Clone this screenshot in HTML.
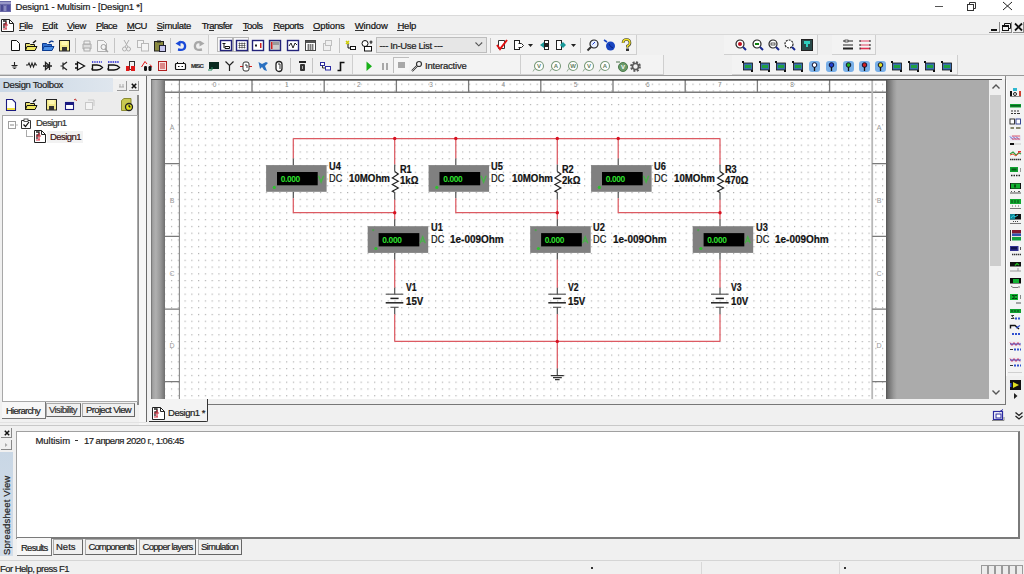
<!DOCTYPE html><html><head><meta charset="utf-8"><style>
html,body{margin:0;padding:0;width:1024px;height:574px;overflow:hidden;background:#f0f0f0;}
body{position:relative;font-family:"Liberation Sans",sans-serif;}
.t{position:absolute;white-space:nowrap;-webkit-text-stroke:0.2px currentColor;}
.b{position:absolute;}
svg.b{overflow:visible;}
</style></head><body>
<div class="b" style="left:0px;top:0px;width:1024px;height:15px;background:#fff;"></div>
<div class="b" style="left:0px;top:15px;width:1024px;height:1px;background:#dadada;"></div>
<svg class="b" style="left:0px;top:1px;" width="12" height="11" viewBox="0 0 12 11"><rect x="0" y="0" width="11" height="11" fill="#6a6aa8"/><rect x="0" y="1" width="11" height="2" fill="#9898c8"/><rect x="1" y="4" width="2" height="6" fill="#4a4a90"/><rect x="4" y="5" width="2" height="5" fill="#8a8ac0"/><rect x="7" y="4" width="3" height="6" fill="#5050a0"/></svg>
<div class="t" style="left:15.60px;top:2.26px;font-size:9.5px;line-height:9.5px;letter-spacing:-0.201px;font-weight:400;color:#1a1a1a;">Design1 - Multisim - [Design1 *]</div>
<div class="b" style="left:935px;top:6px;width:8px;height:1px;background:#555;"></div>
<svg class="b" style="left:967px;top:2px;" width="10" height="9" viewBox="0 0 10 9"><rect x="0.5" y="2.5" width="6" height="6" fill="none" stroke="#333"/><path d="M2.5 2.5V0.5H8.5V6.5H6.5" fill="none" stroke="#333"/></svg>
<svg class="b" style="left:1002px;top:1px;" width="11" height="10" viewBox="0 0 11 10"><path d="M1 1L10 9M10 1L1 9" stroke="#222" stroke-width="1"/></svg>
<div class="b" style="left:0px;top:16px;width:1024px;height:18px;background:#f0f0f0;"></div>
<svg class="b" style="left:1px;top:19px;" width="13" height="13" viewBox="0 0 13 13"><path d="M0.5 0.5H8.5L12.5 4.5V12.5H0.5Z" fill="#fff" stroke="#222"/><path d="M8.5 0.5V4.5H12.5" fill="none" stroke="#222"/><path d="M2 2H5V5H3V9" stroke="#222" stroke-width="1.3" fill="none"/><path d="M2 6H7M5 3V10M2 10H6" stroke="#d03040" stroke-width="1.1" fill="none"/></svg>
<div class="t" style="left:18.90px;top:20.56px;font-size:9.5px;line-height:9.5px;letter-spacing:-0.377px;font-weight:400;color:#111;">File</div>
<div class="b" style="left:18.9px;top:30.2px;width:5.802421875px;height:1px;background:#333;"></div>
<div class="t" style="left:42.30px;top:20.56px;font-size:9.5px;line-height:9.5px;letter-spacing:-0.267px;font-weight:400;color:#111;">Edit</div>
<div class="b" style="left:42.3px;top:30.2px;width:6.336796874999997px;height:1px;background:#333;"></div>
<div class="t" style="left:67.00px;top:20.56px;font-size:9.5px;line-height:9.5px;letter-spacing:-0.355px;font-weight:400;color:#111;">View</div>
<div class="b" style="left:67px;top:30.2px;width:6.3367968750000045px;height:1px;background:#333;"></div>
<div class="t" style="left:96.00px;top:20.56px;font-size:9.5px;line-height:9.5px;letter-spacing:-0.553px;font-weight:400;color:#111;">Place</div>
<div class="b" style="left:96px;top:30.2px;width:6.3367968750000045px;height:1px;background:#333;"></div>
<div class="t" style="left:126.70px;top:20.56px;font-size:9.5px;line-height:9.5px;letter-spacing:-0.445px;font-weight:400;color:#111;">MCU</div>
<div class="b" style="left:126.7px;top:30.2px;width:7.91320312500001px;height:1px;background:#333;"></div>
<div class="t" style="left:156.60px;top:20.56px;font-size:9.5px;line-height:9.5px;letter-spacing:-0.320px;font-weight:400;color:#111;">Simulate</div>
<div class="b" style="left:156.6px;top:30.2px;width:6.3367968750000045px;height:1px;background:#333;"></div>
<div class="t" style="left:201.70px;top:20.56px;font-size:9.5px;line-height:9.5px;letter-spacing:-0.564px;font-weight:400;color:#111;">Transfer</div>
<div class="b" style="left:208.5px;top:30.2px;width:5.0px;height:1px;background:#333;"></div>
<div class="t" style="left:242.70px;top:20.56px;font-size:9.5px;line-height:9.5px;letter-spacing:-0.455px;font-weight:400;color:#111;">Tools</div>
<div class="b" style="left:242.7px;top:30.2px;width:5.802421874999993px;height:1px;background:#333;"></div>
<div class="t" style="left:273.20px;top:20.56px;font-size:9.5px;line-height:9.5px;letter-spacing:-0.466px;font-weight:400;color:#111;">Reports</div>
<div class="b" style="left:273.2px;top:30.2px;width:6.860781250000002px;height:1px;background:#333;"></div>
<div class="t" style="left:313.00px;top:20.56px;font-size:9.5px;line-height:9.5px;letter-spacing:-0.148px;font-weight:400;color:#111;">Options</div>
<div class="b" style="left:313px;top:30.2px;width:7.389218749999998px;height:1px;background:#333;"></div>
<div class="t" style="left:354.80px;top:20.56px;font-size:9.5px;line-height:9.5px;letter-spacing:-0.165px;font-weight:400;color:#111;">Window</div>
<div class="b" style="left:354.8px;top:30.2px;width:8.967109375000007px;height:1px;background:#333;"></div>
<div class="t" style="left:397.40px;top:20.56px;font-size:9.5px;line-height:9.5px;letter-spacing:-0.184px;font-weight:400;color:#111;">Help</div>
<div class="b" style="left:397.4px;top:30.2px;width:6.860781250000002px;height:1px;background:#333;"></div>
<div class="b" style="left:989px;top:22px;width:11px;height:11px;background:#f0f0f0;border-right:1px solid #888;border-bottom:1px solid #888;box-sizing:border-box;"></div>
<div class="b" style="left:1001px;top:22px;width:11px;height:11px;background:#f0f0f0;border-right:1px solid #888;border-bottom:1px solid #888;box-sizing:border-box;"></div>
<div class="b" style="left:1013px;top:22px;width:11px;height:11px;background:#f0f0f0;border-right:1px solid #888;border-bottom:1px solid #888;box-sizing:border-box;"></div>
<svg class="b" style="left:991px;top:28px;" width="6" height="3" viewBox="0 0 6 3"><rect x="0" y="1" width="6" height="2" fill="#111"/></svg>
<svg class="b" style="left:1002px;top:23px;" width="9" height="8" viewBox="0 0 9 8"><rect x="0.5" y="2.5" width="6" height="5" fill="none" stroke="#111"/><rect x="0.5" y="2.5" width="6" height="1.5" fill="#111"/><path d="M2.5 2V0.5H8.5V5.5H7" fill="none" stroke="#111"/></svg>
<svg class="b" style="left:1014px;top:23px;" width="9" height="8" viewBox="0 0 9 8"><path d="M1 0.5L8 7.5M8 0.5L1 7.5" stroke="#111" stroke-width="1.8"/></svg>
<div class="b" style="left:0px;top:34px;width:1024px;height:1px;background:#d8d8d8;"></div>
<div class="b" style="left:0px;top:35px;width:1024px;height:40px;background:#f0f0f0;"></div>
<div class="b" style="left:0px;top:35px;width:209px;height:20px;background:#f0f0f0;border-right:1px solid #cfcfcf;border-bottom:1px solid #cfcfcf;box-sizing:border-box;"></div>
<div class="b" style="left:209px;top:35px;width:428px;height:20px;background:#f3f3f3;border-right:1px solid #cfcfcf;border-bottom:1px solid #cfcfcf;box-sizing:border-box;"></div>
<div class="b" style="left:724px;top:35px;width:94px;height:20px;background:#f3f3f3;border-right:1px solid #cfcfcf;border-bottom:1px solid #cfcfcf;box-sizing:border-box;"></div>
<div class="b" style="left:832px;top:35px;width:44px;height:20px;background:#f3f3f3;border-right:1px solid #cfcfcf;border-bottom:1px solid #cfcfcf;box-sizing:border-box;"></div>
<div class="b" style="left:0px;top:55px;width:353px;height:20px;background:#f0f0f0;border-right:1px solid #cfcfcf;border-bottom:1px solid #cfcfcf;box-sizing:border-box;"></div>
<div class="b" style="left:353px;top:55px;width:168px;height:20px;background:#f3f3f3;border-right:1px solid #cfcfcf;border-bottom:1px solid #cfcfcf;box-sizing:border-box;"></div>
<div class="b" style="left:521px;top:55px;width:143px;height:20px;background:#f3f3f3;border-right:1px solid #cfcfcf;border-bottom:1px solid #cfcfcf;box-sizing:border-box;"></div>
<div class="b" style="left:732px;top:55px;width:226px;height:20px;background:#f3f3f3;border-right:1px solid #cfcfcf;border-bottom:1px solid #cfcfcf;box-sizing:border-box;"></div>
<div class="b" style="left:75px;top:38px;width:1px;height:15px;background:#c4c4c4;"></div>
<div class="b" style="left:114px;top:38px;width:1px;height:15px;background:#c4c4c4;"></div>
<div class="b" style="left:170px;top:38px;width:1px;height:15px;background:#c4c4c4;"></div>
<div class="b" style="left:339px;top:38px;width:1px;height:15px;background:#c4c4c4;"></div>
<div class="b" style="left:490px;top:38px;width:1px;height:15px;background:#c4c4c4;"></div>
<div class="b" style="left:580px;top:38px;width:1px;height:15px;background:#c4c4c4;"></div>
<div class="b" style="left:290px;top:58px;width:1px;height:15px;background:#c4c4c4;"></div>
<div class="b" style="left:312px;top:58px;width:1px;height:15px;background:#c4c4c4;"></div>
<div class="b" style="left:0px;top:75px;width:1024px;height:1px;background:#9a9a9a;"></div>
<div class="b" style="left:0px;top:76px;width:1024px;height:3px;background:#f7f7f7;"></div>
<svg class="b" style="left:10px;top:40px;" width="13" height="13" viewBox="0 0 13 13"><path d="M1.5 0.5H6.5L9.5 3.5V10.5H1.5Z" fill="#fff" stroke="#111"/></svg>
<svg class="b" style="left:25px;top:40px;" width="13" height="13" viewBox="0 0 13 13"><path d="M0.5 3.5H4.5L5.5 4.5H9.5V10.5H0.5Z" fill="#e8e070" stroke="#111"/><path d="M2 6.5H12L10 10.5H0.5Z" fill="#f0e860" stroke="#111"/><path d="M8 3L11 0.5" stroke="#111" stroke-width="1.5"/></svg>
<svg class="b" style="left:42px;top:40px;" width="13" height="13" viewBox="0 0 13 13"><path d="M0.5 3.5H4.5L5.5 4.5H9.5V10.5H0.5Z" fill="#3070d0" stroke="#0a3a90"/><path d="M2 6.5H12L10 10.5H0.5Z" fill="#4a90e8" stroke="#0a3a90"/><path d="M7 3Q9 0 11.5 2" stroke="#0a3a90" fill="none" stroke-width="1.3"/></svg>
<svg class="b" style="left:59px;top:40px;" width="13" height="13" viewBox="0 0 13 13"><rect x="0.5" y="0.5" width="10" height="10.5" fill="#f2e88a" stroke="#222"/><rect x="2.5" y="1" width="6" height="4" fill="#fff8b0"/><rect x="3" y="7" width="5" height="4" fill="#333"/></svg>
<svg class="b" style="left:81px;top:40px;" width="13" height="13" viewBox="0 0 13 13"><path d="M2 4H10V9H2Z" fill="#ddd" stroke="#aaa"/><path d="M3 1H9V4H3Z" fill="#eee" stroke="#aaa"/><rect x="3" y="8" width="6" height="3" fill="#eee" stroke="#aaa"/></svg>
<svg class="b" style="left:97px;top:40px;" width="13" height="13" viewBox="0 0 13 13"><path d="M0.5 0.5H6.5L9.5 3.5V11.5H0.5Z" fill="#f4f4f4" stroke="#b0b0b0"/><circle cx="6.5" cy="7" r="2.5" fill="none" stroke="#a0a0a0"/><path d="M8 9L11 12" stroke="#a0a0a0" stroke-width="1.5"/></svg>
<svg class="b" style="left:122px;top:40px;" width="13" height="13" viewBox="0 0 13 13"><path d="M2 0L6 7M7 0L3 7" stroke="#b0b0b0"/><circle cx="2.5" cy="9" r="2" fill="none" stroke="#b0b0b0"/><circle cx="6.5" cy="9" r="2" fill="none" stroke="#b0b0b0"/></svg>
<svg class="b" style="left:137px;top:40px;" width="13" height="13" viewBox="0 0 13 13"><rect x="0.5" y="0.5" width="6" height="7" fill="#f4f4f4" stroke="#b8b8b8"/><rect x="4.5" y="3.5" width="7" height="7.5" fill="#f4f4f4" stroke="#b8b8b8"/></svg>
<svg class="b" style="left:154px;top:40px;" width="13" height="13" viewBox="0 0 13 13"><rect x="0.5" y="1.5" width="9" height="9.5" fill="#8a8a40" stroke="#222"/><rect x="3" y="0.5" width="4" height="2" fill="#222"/><rect x="5.5" y="5.5" width="6" height="6" fill="#c8c8f0" stroke="#223"/></svg>
<svg class="b" style="left:175px;top:40px;" width="13" height="13" viewBox="0 0 13 13"><path d="M3 9.5Q11 11 10 5Q9 1 4 2.5" fill="none" stroke="#1a4ad8" stroke-width="2.3"/><path d="M0.5 3.5L5.5 0.5V6.5Z" fill="#1a4ad8"/></svg>
<svg class="b" style="left:193px;top:40px;" width="13" height="13" viewBox="0 0 13 13"><path d="M9 9.5Q1 11 2 5Q3 1 8 2.5" fill="none" stroke="#a8a8a8" stroke-width="2.3"/><path d="M11.5 3.5L6.5 0.5V6.5Z" fill="#a8a8a8"/></svg>
<div class="b" style="left:217px;top:37px;width:16px;height:15px;border:1px solid #b8b8b8;background:#f8f8f8;box-sizing:border-box;"></div>
<div class="b" style="left:233px;top:37px;width:16px;height:15px;border:1px solid #b8b8b8;background:#f8f8f8;box-sizing:border-box;"></div>
<svg class="b" style="left:220px;top:40px;" width="13" height="13" viewBox="0 0 13 13"><rect x="0.5" y="0.5" width="11" height="10" fill="#fff" stroke="#23237a" stroke-width="1.4"/><path d="M2.5 3.5H5.5M4 3.5V8M5 6.5H9.5V8.5H5Z" stroke="#111" fill="none"/></svg>
<svg class="b" style="left:236px;top:40px;" width="13" height="13" viewBox="0 0 13 13"><rect x="0.5" y="0.5" width="11" height="10" fill="#fff" stroke="#23237a" stroke-width="1.4"/><path d="M2.5 3.5H9.5M2.5 5.5H9.5M2.5 7.5H9.5M3.5 2.5V8.5M6 2.5V8.5M8.5 2.5V8.5" stroke="#333" stroke-width="0.6"/></svg>
<svg class="b" style="left:252px;top:40px;" width="13" height="13" viewBox="0 0 13 13"><rect x="0.5" y="0.5" width="11" height="10" fill="#fff" stroke="#23237a" stroke-width="1.4"/><path d="M3 5.5H5M4 4V7" stroke="#222"/><rect x="8" y="3" width="1.5" height="5" fill="#d02020"/></svg>
<svg class="b" style="left:269px;top:40px;" width="13" height="13" viewBox="0 0 13 13"><rect x="0.5" y="0.5" width="11" height="10" fill="#ccc" stroke="#23237a" stroke-width="1.4"/><rect x="2" y="2" width="1.5" height="7" fill="#d02020"/><rect x="4" y="2" width="6" height="3" fill="#999"/></svg>
<svg class="b" style="left:287px;top:40px;" width="13" height="13" viewBox="0 0 13 13"><rect x="0.5" y="0.5" width="11" height="10" fill="#fff" stroke="#23237a" stroke-width="1.4"/><path d="M2 6L4 3L6 8L8 3L10 5" stroke="#222" fill="none"/></svg>
<svg class="b" style="left:305px;top:40px;" width="13" height="13" viewBox="0 0 13 13"><rect x="0.5" y="0.5" width="10" height="10" fill="#fff" stroke="#444"/><rect x="1" y="1" width="9" height="2" fill="#555"/><path d="M2 5H9M2 7H9M2 9H9M3.5 4V10M5.5 4V10M7.5 4V10" stroke="#666" stroke-width="0.8"/></svg>
<svg class="b" style="left:322px;top:40px;" width="13" height="13" viewBox="0 0 13 13"><rect x="1.5" y="3.5" width="7" height="7" fill="#f0f0f0" stroke="#c0c0c0"/><rect x="3.5" y="0.5" width="6" height="5" fill="#f0f0f0" stroke="#c0c0c0"/></svg>
<svg class="b" style="left:345px;top:40px;" width="13" height="13" viewBox="0 0 13 13"><path d="M1 1L4 4M4 1L1 4" stroke="#cc0" stroke-width="1.5"/><path d="M3 4V8H6" stroke="#111" fill="none"/><rect x="5.5" y="6.5" width="5" height="3" fill="#fff" stroke="#111"/></svg>
<svg class="b" style="left:361px;top:40px;" width="13" height="13" viewBox="0 0 13 13"><circle cx="4" cy="3.5" r="3" fill="#fff" stroke="#111"/><rect x="3.5" y="6.5" width="7" height="4.5" fill="#fff" stroke="#111"/><path d="M10 0.5V4M8.5 2H11.5" stroke="#111"/></svg>
<div class="b" style="left:376px;top:37px;width:111px;height:16px;background:#e6e6e6;border:1px solid #bdbdbd;box-sizing:border-box;"></div>
<div class="t" style="left:379.50px;top:40.76px;font-size:9.5px;line-height:9.5px;letter-spacing:-0.350px;font-weight:400;color:#222;">--- In-Use List ---</div>
<svg class="b" style="left:475px;top:42px;" width="8" height="5" viewBox="0 0 8 5"><path d="M0.5 0.5L3.8 3.8L7.2 0.5" fill="none" stroke="#555" stroke-width="1.1"/></svg>
<svg class="b" style="left:497px;top:39px;" width="13" height="13" viewBox="0 0 13 13"><path d="M1.5 1.5H7.5V9.5H1.5Z" fill="#fff" stroke="#333"/><path d="M0 6L3 10L10 1" stroke="#e01010" stroke-width="2" fill="none"/></svg>
<svg class="b" style="left:514px;top:40px;" width="13" height="13" viewBox="0 0 13 13"><rect x="0.5" y="0.5" width="5" height="9" fill="#fff" stroke="#222"/><path d="M4.5 3.5H7.5L9.5 5.5L7.5 7.5H4.5" fill="#fff" stroke="#222"/></svg>
<svg class="b" style="left:528px;top:44px;" width="5" height="3" viewBox="0 0 5 3"><path d="M0 0H5L2.5 3Z" fill="#222"/></svg>
<svg class="b" style="left:540px;top:40px;" width="13" height="13" viewBox="0 0 13 13"><rect x="4.5" y="0.5" width="4" height="9" fill="#fff" stroke="#222"/><path d="M0 5L4 2V8Z" fill="#1a9a9a"/><rect x="5" y="3" width="3" height="4" fill="#222"/></svg>
<svg class="b" style="left:556px;top:40px;" width="13" height="13" viewBox="0 0 13 13"><rect x="0.5" y="0.5" width="5" height="9" fill="#fff" stroke="#222"/><path d="M4 5L7 2L10 5L7 8Z" fill="#1a9a9a"/></svg>
<svg class="b" style="left:571px;top:44px;" width="5" height="3" viewBox="0 0 5 3"><path d="M0 0H5L2.5 3Z" fill="#222"/></svg>
<svg class="b" style="left:587px;top:39px;" width="13" height="13" viewBox="0 0 13 13"><circle cx="7" cy="5" r="4" fill="#e8f0ff" stroke="#222" stroke-width="1.2"/><path d="M4 8L0.5 11.5" stroke="#333" stroke-width="2"/><path d="M5.5 5.5L8 3" stroke="#1a3acc"/></svg>
<svg class="b" style="left:603px;top:39px;" width="13" height="13" viewBox="0 0 13 13"><circle cx="7.5" cy="7" r="4.5" fill="#1844c0"/><path d="M6 5Q7 8 10 9" stroke="#082080" fill="none"/><path d="M1 1L4 3" stroke="#1844c0" stroke-width="1.6"/></svg>
<svg class="b" style="left:621px;top:39px;" width="13" height="13" viewBox="0 0 13 13"><path d="M2 4Q2 0.5 5.5 0.5Q9 0.5 9 4Q9 6 6.5 7V8.5" fill="none" stroke="#333" stroke-width="2.6"/><path d="M2 4Q2 0.5 5.5 0.5Q9 0.5 9 4Q9 6 6.5 7V8.5" fill="none" stroke="#f0e020" stroke-width="1.4"/><rect x="5" y="9.5" width="3" height="2.5" fill="#333"/></svg>
<svg class="b" style="left:735px;top:39px;" width="13" height="13" viewBox="0 0 13 13"><circle cx="5" cy="5" r="4" fill="#fff" stroke="#222" stroke-width="1.2"/><circle cx="5" cy="5" r="2" fill="#c01020"/><path d="M8 8L11 11" stroke="#1a2a90" stroke-width="2"/></svg>
<svg class="b" style="left:752px;top:39px;" width="13" height="13" viewBox="0 0 13 13"><circle cx="5" cy="5" r="4" fill="#fff" stroke="#222" stroke-width="1.2"/><rect x="3" y="4" width="4" height="2" fill="#108010"/><path d="M8 8L11 11" stroke="#1a2a90" stroke-width="2"/></svg>
<svg class="b" style="left:768px;top:39px;" width="13" height="13" viewBox="0 0 13 13"><circle cx="5" cy="5" r="4" fill="#fff" stroke="#222" stroke-width="1.2"/><rect x="3" y="4" width="4" height="2" fill="none" stroke="#333" stroke-width="0.8"/><path d="M8 8L11 11" stroke="#1a2a90" stroke-width="2"/></svg>
<svg class="b" style="left:784px;top:39px;" width="13" height="13" viewBox="0 0 13 13"><circle cx="5" cy="5" r="4" fill="#fff" stroke="#222" stroke-width="1.2" stroke-dasharray="2 1"/><path d="M8 8L11 11" stroke="#1a2a90" stroke-width="2"/></svg>
<svg class="b" style="left:801px;top:39px;" width="13" height="13" viewBox="0 0 13 13"><rect x="0.5" y="0.5" width="11" height="11" fill="#2a4a4a" stroke="#222"/><rect x="3" y="2" width="6" height="3" fill="#30d0c0"/><rect x="5" y="5" width="2" height="3" fill="#30d0c0"/></svg>
<svg class="b" style="left:842px;top:39px;" width="13" height="13" viewBox="0 0 13 13"><path d="M1 2H11M1 6H11M1 9.5H11" stroke="#222" stroke-width="1"/><rect x="3" y="1" width="3" height="2" fill="#fff" stroke="#222" stroke-width="0.7"/><rect x="1" y="8.5" width="10" height="2" fill="#222"/></svg>
<svg class="b" style="left:859px;top:39px;" width="13" height="13" viewBox="0 0 13 13"><path d="M1 2H11M1 6H11" stroke="#e04060" stroke-width="1"/><path d="M1 9.5H11" stroke="#e03050" stroke-width="1.6"/><path d="M1 1V3M11 1V3M1 5V7M11 5V7M1 8.5V10.5M11 8.5V10.5" stroke="#222"/></svg>
<svg class="b" style="left:11px;top:61px;" width="8" height="10" viewBox="0 0 8 10"><path d="M3.5 1V4M0.5 4.5H6.5M1.5 6H5.5M2.5 7.5H4.5" stroke="#222" stroke-width="1.1"/></svg>
<svg class="b" style="left:26px;top:61px;" width="12" height="10" viewBox="0 0 12 10"><path d="M0 4H2L3 2L4.5 6L6 2L7.5 6L9 2L10 4H11" stroke="#222" fill="none" stroke-width="1.1"/></svg>
<svg class="b" style="left:43px;top:61px;" width="10" height="11" viewBox="0 0 10 11"><path d="M0 5H9M2.5 1.5V8.5L6.5 5ZM6.5 1V9" stroke="#222" fill="none" stroke-width="1.3"/></svg>
<svg class="b" style="left:60px;top:61px;" width="9" height="11" viewBox="0 0 9 11"><path d="M0.5 5H3M3 1.5V8.5M3 4L7 1M3 6L7 9" stroke="#222" fill="none" stroke-width="1.2"/></svg>
<svg class="b" style="left:75px;top:61px;" width="11" height="11" viewBox="0 0 11 11"><path d="M2.5 1V9L9.5 5Z" fill="#fff" stroke="#111" stroke-width="1.3"/><path d="M0 3H2.5M0 7H2.5" stroke="#111" stroke-width="1.3"/></svg>
<svg class="b" style="left:91px;top:61px;" width="13" height="11" viewBox="0 0 13 11"><path d="M1 1H11" stroke="#2020d0" stroke-width="1.6" stroke-dasharray="1.3 1"/><path d="M1.5 4H6Q9.5 4 11.5 6.5Q9.5 9 6 9H1.5Z" fill="none" stroke="#111" stroke-width="1.3"/><path d="M0 8H2" stroke="#111"/></svg>
<svg class="b" style="left:107px;top:61px;" width="14" height="11" viewBox="0 0 14 11"><path d="M1 1H12" stroke="#2020d0" stroke-width="1.6" stroke-dasharray="1.5 0.8"/><path d="M1.5 4H7Q10.5 4 12.5 6.5Q10.5 9 7 9H1.5Z" fill="none" stroke="#111" stroke-width="1.3"/><path d="M0 8H2" stroke="#111"/></svg>
<svg class="b" style="left:125px;top:61px;" width="11" height="11" viewBox="0 0 11 11"><rect x="4.5" y="0.5" width="5" height="8" fill="none" stroke="#333"/><rect x="1" y="5" width="3.5" height="5" fill="#e01818"/><rect x="6" y="5" width="4" height="5" fill="#e01818"/></svg>
<svg class="b" style="left:141px;top:61px;" width="12" height="11" viewBox="0 0 12 11"><path d="M0.5 6L4 0.5L6 3" stroke="#e01818" fill="none"/><rect x="3" y="5" width="3" height="5" rx="1.2" fill="#111"/><rect x="7.5" y="5" width="3" height="5" rx="1.2" fill="#111"/><path d="M9 3.5L11 6" stroke="#e01818"/></svg>
<svg class="b" style="left:158px;top:61px;" width="10" height="11" viewBox="0 0 10 11"><rect x="0.5" y="0.5" width="8" height="9" fill="#f8e0e0" stroke="#b02020"/><path d="M2 3H7M2 5H7M2 7H7" stroke="#c03030"/></svg>
<svg class="b" style="left:175px;top:61px;" width="12" height="11" viewBox="0 0 12 11"><rect x="0.5" y="2.5" width="10" height="6" rx="1" fill="#fff" stroke="#111" stroke-width="1.2"/><path d="M3 5.5H4.5M6.5 5.5H8M2.5 1V2.5M8.5 1V2.5" stroke="#111"/></svg>
<div class="t" style="left:191.00px;top:63.42px;font-size:6px;line-height:6px;letter-spacing:-0.750px;font-weight:700;color:#333;">MISC</div>
<svg class="b" style="left:208px;top:61px;" width="12" height="11" viewBox="0 0 12 11"><rect x="1" y="1" width="10" height="7" fill="#0a2a20"/><path d="M0 9H4V6" stroke="#2a8a60" fill="none"/></svg>
<svg class="b" style="left:225px;top:61px;" width="9" height="11" viewBox="0 0 9 11"><path d="M4.5 4V10M0.5 0.5L4.5 4.5L8.5 0.5" stroke="#222" fill="none" stroke-width="1.2"/></svg>
<svg class="b" style="left:240px;top:61px;" width="12" height="11" viewBox="0 0 12 11"><path d="M0 5.5H3M9 5.5H12" stroke="#d02020" stroke-width="1.2"/><rect x="3" y="1" width="6" height="9" rx="2" fill="#fff" stroke="#333"/><path d="M5 4H7V7" stroke="#333" fill="none"/></svg>
<svg class="b" style="left:258px;top:61px;" width="11" height="11" viewBox="0 0 11 11"><path d="M0.5 1L4 3L8 1L10 2L7 5L9 10L6 9L4 6L2 8Z" fill="#2a70c0"/></svg>
<svg class="b" style="left:275px;top:61px;" width="9" height="11" viewBox="0 0 9 11"><rect x="1" y="0.5" width="6" height="10" rx="3" fill="#fff" stroke="#222" stroke-width="1.3"/><path d="M3 3H5V8" stroke="#333" fill="none"/></svg>
<svg class="b" style="left:298px;top:61px;" width="9" height="11" viewBox="0 0 9 11"><rect x="1" y="0" width="7" height="2" fill="#222"/><rect x="2" y="3" width="5" height="7" rx="1" fill="#333"/><rect x="4" y="5" width="1" height="3" fill="#aaa"/></svg>
<svg class="b" style="left:320px;top:61px;" width="11" height="11" viewBox="0 0 11 11"><rect x="0.5" y="1.5" width="4" height="3" fill="#fff" stroke="#2a2aa0"/><path d="M2.5 4.5V7H6" stroke="#333" fill="none"/><rect x="5.5" y="5.5" width="5" height="3.5" fill="#fff" stroke="#2a2aa0"/></svg>
<svg class="b" style="left:337px;top:61px;" width="9" height="11" viewBox="0 0 9 11"><path d="M0.5 9.5H3.5V1.5H7.5" stroke="#111" stroke-width="1.6" fill="none"/></svg>
<svg class="b" style="left:366px;top:61px;" width="7" height="11" viewBox="0 0 7 11"><path d="M0.5 0.5V10L6 5.2Z" fill="#18b018"/></svg>
<svg class="b" style="left:382px;top:62px;" width="7" height="10" viewBox="0 0 7 10"><rect x="0" y="1" width="2" height="7" fill="#a8a8a8"/><rect x="4" y="1" width="2" height="7" fill="#a8a8a8"/></svg>
<div class="b" style="left:393px;top:57px;width:16px;height:16px;border-left:1px solid #bdbdbd;border-top:1px solid #bdbdbd;background:#f6f6f6;box-sizing:border-box;"></div>
<div class="b" style="left:398px;top:62px;width:7px;height:6px;background:#a8a8a8;"></div>
<svg class="b" style="left:411px;top:61px;" width="11" height="11" viewBox="0 0 11 11"><circle cx="8" cy="3" r="2.5" fill="none" stroke="#333" stroke-width="1.2"/><path d="M6.5 4.5L1 10" stroke="#333" stroke-width="2"/><path d="M6.5 4.5L1 10" stroke="#fff" stroke-width="0.6"/></svg>
<div class="t" style="left:425.00px;top:60.96px;font-size:9.5px;line-height:9.5px;letter-spacing:-0.211px;font-weight:400;color:#222;">Interactive</div>
<svg class="b" style="left:533px;top:61px;" width="12" height="11" viewBox="0 0 12 11"><circle cx="6" cy="5" r="4.5" fill="#fff" stroke="#7a9a7a" stroke-width="1.1"/><path d="M1.5 8L0 10.5" stroke="#9ab09a"/><text x="6" y="7.3" font-size="6" text-anchor="middle" fill="#608060" font-family="Liberation Sans" font-weight="bold">V</text></svg>
<svg class="b" style="left:550px;top:61px;" width="12" height="11" viewBox="0 0 12 11"><circle cx="6" cy="5" r="4.5" fill="#fff" stroke="#7a9a7a" stroke-width="1.1"/><path d="M1.5 8L0 10.5" stroke="#9ab09a"/><text x="6" y="7.3" font-size="6" text-anchor="middle" fill="#608060" font-family="Liberation Sans" font-weight="bold">A</text></svg>
<svg class="b" style="left:567px;top:61px;" width="12" height="11" viewBox="0 0 12 11"><circle cx="6" cy="5" r="4.5" fill="#fff" stroke="#7a9a7a" stroke-width="1.1"/><path d="M1.5 8L0 10.5" stroke="#9ab09a"/><text x="6" y="7.3" font-size="6" text-anchor="middle" fill="#608060" font-family="Liberation Sans" font-weight="bold">W</text></svg>
<svg class="b" style="left:583px;top:61px;" width="12" height="11" viewBox="0 0 12 11"><circle cx="6" cy="5" r="4.5" fill="#fff" stroke="#7a9a7a" stroke-width="1.1"/><path d="M1.5 8L0 10.5" stroke="#9ab09a"/><text x="6" y="7.3" font-size="6" text-anchor="middle" fill="#608060" font-family="Liberation Sans" font-weight="bold">V</text></svg>
<svg class="b" style="left:599px;top:61px;" width="12" height="11" viewBox="0 0 12 11"><circle cx="6" cy="5" r="4.5" fill="#fff" stroke="#7a9a7a" stroke-width="1.1"/><path d="M1.5 8L0 10.5" stroke="#9ab09a"/><text x="6" y="7.3" font-size="6" text-anchor="middle" fill="#608060" font-family="Liberation Sans" font-weight="bold">A</text></svg>
<svg class="b" style="left:616px;top:61px;" width="12" height="11" viewBox="0 0 12 11"><path d="M0 1H4" stroke="#6a8a6a" stroke-width="1.2"/><circle cx="7" cy="6" r="4.5" fill="#6a9a6a" stroke="#4a7a4a"/><text x="7" y="8.3" font-size="6" text-anchor="middle" fill="#fff" font-family="Liberation Sans" font-weight="bold">V</text></svg>
<svg class="b" style="left:630px;top:61px;" width="11" height="11" viewBox="0 0 11 11"><circle cx="5.5" cy="5.5" r="4.2" fill="none" stroke="#5a5a5a" stroke-width="2.4" stroke-dasharray="1.9 1.4"/><circle cx="5.5" cy="5.5" r="3" fill="none" stroke="#5a5a5a" stroke-width="1.6"/></svg>
<svg class="b" style="left:742px;top:61px;" width="12" height="12" viewBox="0 0 12 12"><rect x="1.5" y="2" width="9" height="7" fill="#3a70b0" stroke="#111" stroke-width="0.8"/><rect x="3" y="4" width="6" height="3" fill="#20a040"/><rect x="0" y="0" width="2" height="2" fill="#111"/><rect x="9" y="9" width="2" height="2" fill="#111"/></svg>
<svg class="b" style="left:759px;top:61px;" width="12" height="12" viewBox="0 0 12 12"><rect x="1.5" y="2" width="9" height="7" fill="#3a70b0" stroke="#111" stroke-width="0.8"/><rect x="3" y="4" width="6" height="3" fill="#20a040"/><rect x="0" y="0" width="2" height="2" fill="#111"/><rect x="9" y="9" width="2" height="2" fill="#111"/></svg>
<svg class="b" style="left:775px;top:61px;" width="12" height="12" viewBox="0 0 12 12"><rect x="1.5" y="2" width="9" height="7" fill="#3a70b0" stroke="#111" stroke-width="0.8"/><rect x="3" y="4" width="6" height="3" fill="#20a040"/><rect x="0" y="0" width="2" height="2" fill="#111"/><rect x="9" y="9" width="2" height="2" fill="#111"/></svg>
<svg class="b" style="left:792px;top:61px;" width="12" height="12" viewBox="0 0 12 12"><rect x="1.5" y="2" width="9" height="7" fill="#3a70b0" stroke="#111" stroke-width="0.8"/><rect x="3" y="4" width="6" height="3" fill="#20a040"/><rect x="0" y="0" width="2" height="2" fill="#111"/><rect x="9" y="9" width="2" height="2" fill="#111"/></svg>
<svg class="b" style="left:809px;top:61px;" width="12" height="12" viewBox="0 0 12 12"><rect x="0" y="0" width="11" height="11" rx="3" fill="#7ab0e8"/><circle cx="5.5" cy="4" r="2.3" fill="#fff" stroke="#113"/><path d="M5.5 6V10" stroke="#111" stroke-width="1.3"/></svg>
<svg class="b" style="left:826px;top:61px;" width="12" height="12" viewBox="0 0 12 12"><rect x="0" y="0" width="11" height="11" rx="3" fill="#7ab0e8"/><circle cx="5.5" cy="4" r="2.3" fill="#2040d0" stroke="#113"/><path d="M5.5 6V10" stroke="#111" stroke-width="1.3"/></svg>
<svg class="b" style="left:843px;top:61px;" width="12" height="12" viewBox="0 0 12 12"><rect x="0" y="0" width="11" height="11" rx="3" fill="#7ab0e8"/><circle cx="5.5" cy="4" r="2.3" fill="#20b020" stroke="#113"/><path d="M5.5 6V10" stroke="#111" stroke-width="1.3"/></svg>
<svg class="b" style="left:859px;top:61px;" width="12" height="12" viewBox="0 0 12 12"><rect x="0" y="0" width="11" height="11" rx="3" fill="#7ab0e8"/><circle cx="5.5" cy="4" r="2.3" fill="#d02020" stroke="#113"/><path d="M5.5 6V10" stroke="#111" stroke-width="1.3"/></svg>
<svg class="b" style="left:875px;top:61px;" width="12" height="12" viewBox="0 0 12 12"><rect x="0" y="0" width="11" height="11" rx="3" fill="#7ab0e8"/><circle cx="5.5" cy="4" r="2.3" fill="#e0e020" stroke="#113"/><path d="M5.5 6V10" stroke="#111" stroke-width="1.3"/></svg>
<svg class="b" style="left:891px;top:61px;" width="12" height="12" viewBox="0 0 12 12"><rect x="1.5" y="2" width="9" height="7" fill="#3a70b0" stroke="#111" stroke-width="0.8"/><rect x="3" y="4" width="6" height="3" fill="#20a040"/><rect x="0" y="0" width="2" height="2" fill="#111"/><rect x="9" y="9" width="2" height="2" fill="#111"/></svg>
<svg class="b" style="left:908px;top:61px;" width="12" height="12" viewBox="0 0 12 12"><rect x="1.5" y="2" width="9" height="7" fill="#3a70b0" stroke="#111" stroke-width="0.8"/><rect x="3" y="4" width="6" height="3" fill="#20a040"/><rect x="0" y="0" width="2" height="2" fill="#111"/><rect x="9" y="9" width="2" height="2" fill="#111"/></svg>
<svg class="b" style="left:924px;top:61px;" width="12" height="12" viewBox="0 0 12 12"><rect x="1.5" y="2" width="9" height="7" fill="#3a70b0" stroke="#111" stroke-width="0.8"/><rect x="3" y="4" width="6" height="3" fill="#20a040"/><rect x="0" y="0" width="2" height="2" fill="#111"/><rect x="9" y="9" width="2" height="2" fill="#111"/></svg>
<svg class="b" style="left:941px;top:61px;" width="12" height="12" viewBox="0 0 12 12"><rect x="1.5" y="2" width="9" height="7" fill="#3a70b0" stroke="#111" stroke-width="0.8"/><rect x="3" y="4" width="6" height="3" fill="#20a040"/><rect x="0" y="0" width="2" height="2" fill="#111"/><rect x="9" y="9" width="2" height="2" fill="#111"/></svg>
<div class="b" style="left:0px;top:78px;width:113px;height:14px;background:linear-gradient(to right,#cbd8e6,#d6e0ea 60%,#dfe6ee);"></div>
<div class="t" style="left:3.00px;top:80.16px;font-size:9.5px;line-height:9.5px;letter-spacing:-0.341px;font-weight:400;color:#222;">Design Toolbox</div>
<div class="b" style="left:116.5px;top:80.5px;width:10px;height:10px;background:#f0f0f0;border-right:1px solid #999;border-bottom:1px solid #999;box-sizing:border-box;"></div>
<div class="b" style="left:128.5px;top:80.5px;width:10px;height:10px;background:#f0f0f0;border-right:1px solid #999;border-bottom:1px solid #999;box-sizing:border-box;"></div>
<svg class="b" style="left:119px;top:84px;" width="5" height="4" viewBox="0 0 5 4"><path d="M0 3H5M1 0V3M4 0V3" stroke="#aaa"/></svg>
<svg class="b" style="left:131px;top:82.5px;" width="6" height="6" viewBox="0 0 6 6"><path d="M0.8 0.8L5.2 5.2M5.2 0.8L0.8 5.2" stroke="#111" stroke-width="1.6"/></svg>
<div class="b" style="left:0px;top:92px;width:139px;height:23px;background:#ececec;"></div>
<div class="b" style="left:137px;top:95px;width:2px;height:310px;background:#8a8a8a;"></div>
<svg class="b" style="left:6px;top:99px;" width="11" height="13" viewBox="0 0 11 13"><path d="M0.5 0.5H6.5L9.5 3.5V11.5H0.5Z" fill="#fff" stroke="#1a1a80" stroke-width="1.1"/><path d="M1 9H9V11H1Z" fill="#f0e040"/></svg>
<svg class="b" style="left:25px;top:99px;" width="13" height="13" viewBox="0 0 13 13"><path d="M0.5 3.5H4.5L5.5 4.5H9.5V10.5H0.5Z" fill="#e8e070" stroke="#111"/><path d="M2 6.5H12L10 10.5H0.5Z" fill="#f0e860" stroke="#111"/><path d="M8 3L11 0.5" stroke="#111" stroke-width="1.5"/></svg>
<svg class="b" style="left:46px;top:99px;" width="12" height="12" viewBox="0 0 12 12"><rect x="0.5" y="0.5" width="10" height="10.5" fill="#f2e88a" stroke="#222"/><rect x="2.5" y="1" width="6" height="4" fill="#fff8b0"/><rect x="3" y="7" width="5" height="4" fill="#333"/></svg>
<svg class="b" style="left:65px;top:99px;" width="12" height="12" viewBox="0 0 12 12"><rect x="0.5" y="3.5" width="8" height="7" fill="#fff" stroke="#1a1a80" stroke-width="1.1"/><rect x="1" y="4" width="7" height="2" fill="#1a1a80"/><path d="M9 1L10.5 0L11.5 2" stroke="#c03030" fill="none"/></svg>
<svg class="b" style="left:84px;top:99px;" width="12" height="12" viewBox="0 0 12 12"><rect x="1.5" y="3.5" width="7" height="7" fill="#f4f4f4" stroke="#c8c8c8"/><path d="M4 1H10V7" stroke="#c8c8c8" fill="none"/></svg>
<svg class="b" style="left:121px;top:98px;" width="13" height="13" viewBox="0 0 13 13"><path d="M0.5 2.5L3 0.5H10V10L7.5 12.5H0.5Z" fill="#c8c850" stroke="#8a8a30"/><circle cx="8" cy="9" r="3.5" fill="#e0e020" stroke="#222" stroke-width="1.3"/><path d="M8 7V9H9.5" stroke="#222"/></svg>
<div class="b" style="left:2px;top:115px;width:136px;height:287px;background:#fff;border:1px solid #a8a8a8;box-sizing:border-box;"></div>
<svg class="b" style="left:8px;top:121px;" width="9" height="9" viewBox="0 0 9 9"><rect x="0.5" y="0.5" width="7" height="7" fill="#fff" stroke="#a0a0a0"/><path d="M2 4H6" stroke="#888"/><path d="M8 4H10" stroke="#bbb"/></svg>
<svg class="b" style="left:21px;top:118px;" width="11" height="12" viewBox="0 0 11 12"><path d="M0.5 2.5H9.5V10.5H0.5Z" fill="#fff" stroke="#333"/><rect x="3" y="1" width="4" height="2.5" fill="#fff" stroke="#333" stroke-width="0.8"/><path d="M2.5 6.5L4.5 8.5L8 4" stroke="#111" stroke-width="1.2" fill="none"/></svg>
<div class="t" style="left:36.00px;top:118.36px;font-size:9.5px;line-height:9.5px;letter-spacing:-0.622px;font-weight:400;color:#333;">Design1</div>
<div class="b" style="left:47px;top:130.5px;width:36px;height:12.5px;background:#f2f2f2;"></div>
<div class="b" style="left:26px;top:130px;width:1px;height:7px;background:#aaa;"></div>
<div class="b" style="left:26px;top:136px;width:7px;height:1px;background:#aaa;"></div>
<svg class="b" style="left:34px;top:130px;" width="13" height="14" viewBox="0 0 13 14"><path d="M0.5 0.5H7.5L11.5 4.5V12.5H0.5Z" fill="#fff" stroke="#222"/><path d="M7.5 0.5V4.5H11.5" fill="none" stroke="#222"/><path d="M2 2H5V5H3V9" stroke="#222" stroke-width="1.3" fill="none"/><path d="M2 6H7M5 3V10M2 10H6" stroke="#d03040" stroke-width="1.1" fill="none"/></svg>
<div class="t" style="left:50.00px;top:132.26px;font-size:9.5px;line-height:9.5px;letter-spacing:-0.550px;font-weight:400;color:#3a1010;">Design1</div>
<div class="b" style="left:2px;top:402px;width:44px;height:17px;background:#f7f7f7;border-right:1px solid #777;border-bottom:1px solid #777;box-sizing:border-box;"></div>
<div class="t" style="left:6.00px;top:406.46px;font-size:9.5px;line-height:9.5px;letter-spacing:-0.739px;font-weight:400;color:#222;">Hierarchy</div>
<div class="b" style="left:46px;top:403px;width:35px;height:14px;background:#f0f0f0;border:1px solid #aaa;border-right-color:#666;border-bottom-color:#666;box-sizing:border-box;"></div>
<div class="t" style="left:49.00px;top:404.96px;font-size:9.5px;line-height:9.5px;letter-spacing:-0.614px;font-weight:400;color:#333;">Visibility</div>
<div class="b" style="left:82px;top:403px;width:53px;height:14px;background:#f0f0f0;border:1px solid #aaa;border-right-color:#666;border-bottom-color:#666;box-sizing:border-box;"></div>
<div class="t" style="left:86.00px;top:404.96px;font-size:9.5px;line-height:9.5px;letter-spacing:-0.635px;font-weight:400;color:#222;">Project View</div>
<div class="b" style="left:139px;top:76px;width:7px;height:349px;background:#f6f6f6;"></div>
<div class="b" style="left:146px;top:76px;width:1px;height:346px;background:#6a6a6a;"></div>
<div class="b" style="left:147px;top:76px;width:4px;height:346px;background:#f0f0f0;"></div>
<div class="b" style="left:151px;top:79px;width:855px;height:325px;background:#f0f0f0;border-right:1px solid #777;border-bottom:1px solid #777;box-sizing:border-box;"></div>
<div class="b" style="left:151px;top:79px;width:851px;height:1px;background:#555;"></div>
<div class="b" style="left:151px;top:80px;width:14px;height:319px;background:linear-gradient(to right,#6a6a6a 0%,#a2a2a2 12%,#b0b0b0 35%,#959595 70%,#6e6e6e 100%);"></div>
<div class="b" style="left:886px;top:80px;width:103px;height:319px;background:#ababab;"></div>
<div class="b" style="left:886px;top:80px;width:11px;height:319px;background:linear-gradient(to right,#555 0%,#6e6e6e 18%,#9a9a9a 70%,#ababab 100%);"></div>
<div class="b" style="left:165px;top:80px;width:721px;height:319px;background:#fff;"></div>
<div class="b" style="left:989px;top:80px;width:14px;height:319px;background:#f0f0f0;"></div>
<div class="b" style="left:990px;top:95px;width:11px;height:171px;background:#cdcdcd;"></div>
<svg class="b" style="left:992px;top:84px;" width="8" height="5" viewBox="0 0 8 5"><path d="M0.5 4.5L4 1L7.5 4.5" fill="none" stroke="#555" stroke-width="1.4"/></svg>
<svg class="b" style="left:992px;top:390px;" width="8" height="5" viewBox="0 0 8 5"><path d="M0.5 0.5L4 4L7.5 0.5" fill="none" stroke="#555" stroke-width="1.4"/></svg>
<svg class="b" style="left:0px;top:0px;pointer-events:none;" width="1024" height="574" viewBox="0 0 1024 574"><defs><clipPath id="sheet"><rect x="165" y="80" width="721.5" height="319"/></clipPath><pattern id="dots" patternUnits="userSpaceOnUse" x="184.5" y="97.2" width="6.772" height="6.772"><rect x="0" y="0" width="1.2" height="1.2" fill="#b0b0b0"/></pattern></defs><g clip-path="url(#sheet)"><rect x="165" y="80" width="721.5" height="319" fill="url(#dots)"/><path d="M165 92.3H886.5" stroke="#7a7a7a" stroke-width="1.4"/><path d="M179.4 80V399" stroke="#8a8a8a" stroke-width="1.1"/><path d="M872.2 80V399" stroke="#b8b8b8" stroke-width="1.8"/><path d="M252.0 80V92" stroke="#7a7a7a" stroke-width="1.3"/><path d="M324.2 80V92" stroke="#7a7a7a" stroke-width="1.3"/><path d="M396.4 80V92" stroke="#7a7a7a" stroke-width="1.3"/><path d="M468.6 80V92" stroke="#7a7a7a" stroke-width="1.3"/><path d="M540.8 80V92" stroke="#7a7a7a" stroke-width="1.3"/><path d="M613.0 80V92" stroke="#7a7a7a" stroke-width="1.3"/><path d="M685.2 80V92" stroke="#7a7a7a" stroke-width="1.3"/><path d="M757.4 80V92" stroke="#7a7a7a" stroke-width="1.3"/><path d="M829.6 80V92" stroke="#7a7a7a" stroke-width="1.3"/><path d="M165 163.6H179.4M872.2 163.6H886.5" stroke="#7a7a7a" stroke-width="1.3"/><path d="M165 236.3H179.4M872.2 236.3H886.5" stroke="#7a7a7a" stroke-width="1.3"/><path d="M165 309.1H179.4M872.2 309.1H886.5" stroke="#7a7a7a" stroke-width="1.3"/><path d="M165 381.6H179.4M872.2 381.6H886.5" stroke="#7a7a7a" stroke-width="1.3"/><text x="214.5" y="86.9" font-size="6.5" fill="#888" text-anchor="middle" font-family="Liberation Sans">0</text><text x="286.7" y="86.9" font-size="6.5" fill="#888" text-anchor="middle" font-family="Liberation Sans">1</text><text x="358.9" y="86.9" font-size="6.5" fill="#888" text-anchor="middle" font-family="Liberation Sans">2</text><text x="431.1" y="86.9" font-size="6.5" fill="#888" text-anchor="middle" font-family="Liberation Sans">3</text><text x="503.3" y="86.9" font-size="6.5" fill="#888" text-anchor="middle" font-family="Liberation Sans">4</text><text x="575.5" y="86.9" font-size="6.5" fill="#888" text-anchor="middle" font-family="Liberation Sans">5</text><text x="647.7" y="86.9" font-size="6.5" fill="#888" text-anchor="middle" font-family="Liberation Sans">6</text><text x="719.9" y="86.9" font-size="6.5" fill="#888" text-anchor="middle" font-family="Liberation Sans">7</text><text x="792.1" y="86.9" font-size="6.5" fill="#888" text-anchor="middle" font-family="Liberation Sans">8</text><text x="172" y="130.3" font-size="7" fill="#999" text-anchor="middle" font-family="Liberation Sans">A</text><text x="879" y="130.3" font-size="7" fill="#999" text-anchor="middle" font-family="Liberation Sans">A</text><text x="172" y="203.0" font-size="7" fill="#999" text-anchor="middle" font-family="Liberation Sans">B</text><text x="879" y="203.0" font-size="7" fill="#999" text-anchor="middle" font-family="Liberation Sans">B</text><text x="172" y="275.7" font-size="7" fill="#999" text-anchor="middle" font-family="Liberation Sans">C</text><text x="879" y="275.7" font-size="7" fill="#999" text-anchor="middle" font-family="Liberation Sans">C</text><text x="172" y="348.4" font-size="7" fill="#999" text-anchor="middle" font-family="Liberation Sans">D</text><text x="879" y="348.4" font-size="7" fill="#999" text-anchor="middle" font-family="Liberation Sans">D</text><path d="M165 80.3H886.5" stroke="#444" stroke-width="0.8"/><path d="M293.3 138.5H720.0" stroke="#dc5a62" stroke-width="1.25" fill="none"/><path d="M394.7 341.4H720.0" stroke="#dc5a62" stroke-width="1.25" fill="none"/><path d="M293.3 138.5V158.5" stroke="#dc5a62" stroke-width="1.25" fill="none"/><path d="M293.3 158.5V165.2" stroke="#4a4a4a" stroke-width="1.15" fill="none"/><path d="M293.3 191.8V198.3" stroke="#4a4a4a" stroke-width="1.15" fill="none"/><path d="M293.3 198.3V212.7H394.7" stroke="#dc5a62" stroke-width="1.25" fill="none"/><path d="M394.7 138.5V164.5" stroke="#dc5a62" stroke-width="1.25" fill="none"/><path d="M394.7 164.5V171.6" stroke="#4a4a4a" stroke-width="1.15" fill="none"/><path d="M394.7 171.6L398.3 174L392.3 178L398.3 181.3L392.3 184.6L398.3 188L392.3 191.3L394.7 192.6" stroke="#222" stroke-width="1.15" fill="none" stroke-linejoin="miter"/><path d="M394.7 192.6V199.7" stroke="#4a4a4a" stroke-width="1.15" fill="none"/><path d="M394.7 199.7V219.3" stroke="#dc5a62" stroke-width="1.25" fill="none"/><path d="M394.7 219.3V226.2" stroke="#4a4a4a" stroke-width="1.15" fill="none"/><path d="M394.7 253V259.7" stroke="#4a4a4a" stroke-width="1.15" fill="none"/><path d="M394.7 259.7V287.8" stroke="#dc5a62" stroke-width="1.25" fill="none"/><path d="M394.7 287.8V294.2" stroke="#4a4a4a" stroke-width="1.15" fill="none"/><path d="M385.7 294.2H403.3" stroke="#5a5a5a" stroke-width="1.2"/><path d="M390.4 298.4H398.59999999999997" stroke="#222" stroke-width="1.5"/><path d="M385.7 302.8H403.3" stroke="#222" stroke-width="1.5"/><path d="M390.4 307.3H398.59999999999997" stroke="#5a5a5a" stroke-width="1.2"/><path d="M394.7 307.3V314.3" stroke="#4a4a4a" stroke-width="1.15" fill="none"/><path d="M394.7 314.3V341.4" stroke="#dc5a62" stroke-width="1.25" fill="none"/><path d="M455.8 138.5V158.5" stroke="#dc5a62" stroke-width="1.25" fill="none"/><path d="M455.8 158.5V165.2" stroke="#4a4a4a" stroke-width="1.15" fill="none"/><path d="M455.8 191.8V198.3" stroke="#4a4a4a" stroke-width="1.15" fill="none"/><path d="M455.8 198.3V212.7H557.3" stroke="#dc5a62" stroke-width="1.25" fill="none"/><path d="M557.3 138.5V164.5" stroke="#dc5a62" stroke-width="1.25" fill="none"/><path d="M557.3 164.5V171.6" stroke="#4a4a4a" stroke-width="1.15" fill="none"/><path d="M557.3 171.6L560.9 174L554.9 178L560.9 181.3L554.9 184.6L560.9 188L554.9 191.3L557.3 192.6" stroke="#222" stroke-width="1.15" fill="none" stroke-linejoin="miter"/><path d="M557.3 192.6V199.7" stroke="#4a4a4a" stroke-width="1.15" fill="none"/><path d="M557.3 199.7V219.3" stroke="#dc5a62" stroke-width="1.25" fill="none"/><path d="M557.3 219.3V226.2" stroke="#4a4a4a" stroke-width="1.15" fill="none"/><path d="M557.3 253V259.7" stroke="#4a4a4a" stroke-width="1.15" fill="none"/><path d="M557.3 259.7V287.8" stroke="#dc5a62" stroke-width="1.25" fill="none"/><path d="M557.3 287.8V294.2" stroke="#4a4a4a" stroke-width="1.15" fill="none"/><path d="M548.3 294.2H565.9" stroke="#5a5a5a" stroke-width="1.2"/><path d="M553.0 298.4H561.1999999999999" stroke="#222" stroke-width="1.5"/><path d="M548.3 302.8H565.9" stroke="#222" stroke-width="1.5"/><path d="M553.0 307.3H561.1999999999999" stroke="#5a5a5a" stroke-width="1.2"/><path d="M557.3 307.3V314.3" stroke="#4a4a4a" stroke-width="1.15" fill="none"/><path d="M557.3 314.3V341.4" stroke="#dc5a62" stroke-width="1.25" fill="none"/><path d="M618.2 138.5V158.5" stroke="#dc5a62" stroke-width="1.25" fill="none"/><path d="M618.2 158.5V165.2" stroke="#4a4a4a" stroke-width="1.15" fill="none"/><path d="M618.2 191.8V198.3" stroke="#4a4a4a" stroke-width="1.15" fill="none"/><path d="M618.2 198.3V212.7H720.0" stroke="#dc5a62" stroke-width="1.25" fill="none"/><path d="M720.0 138.5V164.5" stroke="#dc5a62" stroke-width="1.25" fill="none"/><path d="M720.0 164.5V171.6" stroke="#4a4a4a" stroke-width="1.15" fill="none"/><path d="M720.0 171.6L723.6 174L717.6 178L723.6 181.3L717.6 184.6L723.6 188L717.6 191.3L720.0 192.6" stroke="#222" stroke-width="1.15" fill="none" stroke-linejoin="miter"/><path d="M720.0 192.6V199.7" stroke="#4a4a4a" stroke-width="1.15" fill="none"/><path d="M720.0 199.7V219.3" stroke="#dc5a62" stroke-width="1.25" fill="none"/><path d="M720.0 219.3V226.2" stroke="#4a4a4a" stroke-width="1.15" fill="none"/><path d="M720.0 253V259.7" stroke="#4a4a4a" stroke-width="1.15" fill="none"/><path d="M720.0 259.7V287.8" stroke="#dc5a62" stroke-width="1.25" fill="none"/><path d="M720.0 287.8V294.2" stroke="#4a4a4a" stroke-width="1.15" fill="none"/><path d="M711.0 294.2H728.6" stroke="#5a5a5a" stroke-width="1.2"/><path d="M715.7 298.4H723.9" stroke="#222" stroke-width="1.5"/><path d="M711.0 302.8H728.6" stroke="#222" stroke-width="1.5"/><path d="M715.7 307.3H723.9" stroke="#5a5a5a" stroke-width="1.2"/><path d="M720.0 307.3V314.3" stroke="#4a4a4a" stroke-width="1.15" fill="none"/><path d="M720.0 314.3V341.4" stroke="#dc5a62" stroke-width="1.25" fill="none"/><path d="M557.3 341.4V368.5" stroke="#dc5a62" stroke-width="1.25" fill="none"/><path d="M557.3 368.5V375.5" stroke="#4a4a4a" stroke-width="1.15" fill="none"/><path d="M551.0 375.6H563.8M553.0 377.6H561.8M555.0 379.6H559.5999999999999" stroke="#333" stroke-width="1.1"/><circle cx="394.7" cy="138.5" r="1.7" fill="#d81020"/><circle cx="455.8" cy="138.5" r="1.7" fill="#d81020"/><circle cx="557.3" cy="138.5" r="1.7" fill="#d81020"/><circle cx="618.2" cy="138.5" r="1.7" fill="#d81020"/><circle cx="394.7" cy="212.7" r="1.7" fill="#d81020"/><circle cx="557.3" cy="212.7" r="1.7" fill="#d81020"/><circle cx="720.0" cy="212.7" r="1.7" fill="#d81020"/><circle cx="557.3" cy="341.4" r="1.7" fill="#d81020"/><rect x="266.1" y="165.1" width="60.5" height="26.7" fill="#808080"/><rect x="277.0" y="172.0" width="40.7" height="13.3" fill="#000"/><text x="280.70000000000005" y="182.0" font-size="8.4" fill="#2ee02e" font-family="Liberation Sans" font-weight="bold" letter-spacing="-0.35">0.000</text><path d="M318.5 175.7L321.1 182.1L323.70000000000005 175.7" stroke="#48b048" stroke-width="1.5" fill="none"/><circle cx="274.3" cy="187.4" r="1.6" fill="#30c030"/><rect x="367.7" y="226.2" width="60.5" height="26.7" fill="#808080"/><rect x="378.59999999999997" y="233.1" width="40.7" height="13.3" fill="#000"/><text x="382.3" y="243.1" font-size="8.4" fill="#2ee02e" font-family="Liberation Sans" font-weight="bold" letter-spacing="-0.35">0.000</text><path d="M420.09999999999997 243.2L422.7 236.79999999999998L425.3 243.2M421.0 241.2H424.4" stroke="#48b048" stroke-width="1.3" fill="none"/><circle cx="375.9" cy="248.5" r="1.6" fill="#30c030"/><circle cx="373.2" cy="230.2" r="1.1" fill="#50a050"/><rect x="428.6" y="165.1" width="60.5" height="26.7" fill="#808080"/><rect x="439.5" y="172.0" width="40.7" height="13.3" fill="#000"/><text x="443.20000000000005" y="182.0" font-size="8.4" fill="#2ee02e" font-family="Liberation Sans" font-weight="bold" letter-spacing="-0.35">0.000</text><path d="M481.0 175.7L483.6 182.1L486.20000000000005 175.7" stroke="#48b048" stroke-width="1.5" fill="none"/><circle cx="436.8" cy="187.4" r="1.6" fill="#30c030"/><rect x="530.2" y="226.2" width="60.5" height="26.7" fill="#808080"/><rect x="541.1" y="233.1" width="40.7" height="13.3" fill="#000"/><text x="544.8000000000001" y="243.1" font-size="8.4" fill="#2ee02e" font-family="Liberation Sans" font-weight="bold" letter-spacing="-0.35">0.000</text><path d="M582.6 243.2L585.2 236.79999999999998L587.8000000000001 243.2M583.5 241.2H586.9000000000001" stroke="#48b048" stroke-width="1.3" fill="none"/><circle cx="538.4000000000001" cy="248.5" r="1.6" fill="#30c030"/><circle cx="535.7" cy="230.2" r="1.1" fill="#50a050"/><rect x="591.1" y="165.1" width="60.5" height="26.7" fill="#808080"/><rect x="602.0" y="172.0" width="40.7" height="13.3" fill="#000"/><text x="605.7" y="182.0" font-size="8.4" fill="#2ee02e" font-family="Liberation Sans" font-weight="bold" letter-spacing="-0.35">0.000</text><path d="M643.5 175.7L646.1 182.1L648.7 175.7" stroke="#48b048" stroke-width="1.5" fill="none"/><circle cx="599.3000000000001" cy="187.4" r="1.6" fill="#30c030"/><rect x="692.7" y="226.2" width="60.5" height="26.7" fill="#808080"/><rect x="703.6" y="233.1" width="40.7" height="13.3" fill="#000"/><text x="707.3000000000001" y="243.1" font-size="8.4" fill="#2ee02e" font-family="Liberation Sans" font-weight="bold" letter-spacing="-0.35">0.000</text><path d="M745.1 243.2L747.7 236.79999999999998L750.3000000000001 243.2M746.0 241.2H749.4000000000001" stroke="#48b048" stroke-width="1.3" fill="none"/><circle cx="700.9000000000001" cy="248.5" r="1.6" fill="#30c030"/><circle cx="698.2" cy="230.2" r="1.1" fill="#50a050"/></g></svg>
<div class="t" style="left:328.80px;top:160.53px;font-size:10.6px;line-height:10.6px;letter-spacing:0.000px;font-weight:700;color:#111;transform:scaleX(0.8709);transform-origin:0 0;">U4</div>
<div class="t" style="left:328.80px;top:172.66px;font-size:10.8px;line-height:10.8px;letter-spacing:0.000px;font-weight:400;color:#111;transform:scaleX(0.8526);transform-origin:0 0;">DC</div>
<div class="t" style="left:349.20px;top:173.67px;font-size:10.2px;line-height:10.2px;letter-spacing:0.000px;font-weight:700;color:#111;transform:scaleX(0.9518);transform-origin:0 0;">10MOhm</div>
<div class="t" style="left:399.90px;top:164.57px;font-size:10.2px;line-height:10.2px;letter-spacing:0.000px;font-weight:700;color:#111;transform:scaleX(0.8973);transform-origin:0 0;">R1</div>
<div class="t" style="left:399.90px;top:176.23px;font-size:10.0px;line-height:10.0px;letter-spacing:0.000px;font-weight:700;color:#111;transform:scaleX(0.9614);transform-origin:0 0;">1kΩ</div>
<div class="t" style="left:430.70px;top:222.03px;font-size:10.6px;line-height:10.6px;letter-spacing:0.000px;font-weight:700;color:#111;transform:scaleX(0.8709);transform-origin:0 0;">U1</div>
<div class="t" style="left:430.70px;top:234.16px;font-size:10.8px;line-height:10.8px;letter-spacing:0.000px;font-weight:400;color:#111;transform:scaleX(0.8526);transform-origin:0 0;">DC</div>
<div class="t" style="left:450.00px;top:235.07px;font-size:10.2px;line-height:10.2px;letter-spacing:0.000px;font-weight:700;color:#111;transform:scaleX(0.9783);transform-origin:0 0;">1e-009Ohm</div>
<div class="t" style="left:405.60px;top:282.97px;font-size:10.2px;line-height:10.2px;letter-spacing:0.000px;font-weight:700;color:#111;transform:scaleX(0.8496);transform-origin:0 0;">V1</div>
<div class="t" style="left:405.60px;top:296.94px;font-size:10.0px;line-height:10.0px;letter-spacing:0.000px;font-weight:700;color:#111;transform:scaleX(0.9667);transform-origin:0 0;">15V</div>
<div class="t" style="left:491.30px;top:160.53px;font-size:10.6px;line-height:10.6px;letter-spacing:0.000px;font-weight:700;color:#111;transform:scaleX(0.8709);transform-origin:0 0;">U5</div>
<div class="t" style="left:491.30px;top:172.66px;font-size:10.8px;line-height:10.8px;letter-spacing:0.000px;font-weight:400;color:#111;transform:scaleX(0.8526);transform-origin:0 0;">DC</div>
<div class="t" style="left:511.70px;top:173.67px;font-size:10.2px;line-height:10.2px;letter-spacing:0.000px;font-weight:700;color:#111;transform:scaleX(0.9518);transform-origin:0 0;">10MOhm</div>
<div class="t" style="left:562.40px;top:164.57px;font-size:10.2px;line-height:10.2px;letter-spacing:0.000px;font-weight:700;color:#111;transform:scaleX(0.8973);transform-origin:0 0;">R2</div>
<div class="t" style="left:562.40px;top:176.23px;font-size:10.0px;line-height:10.0px;letter-spacing:0.000px;font-weight:700;color:#111;transform:scaleX(0.9614);transform-origin:0 0;">2kΩ</div>
<div class="t" style="left:593.20px;top:222.03px;font-size:10.6px;line-height:10.6px;letter-spacing:0.000px;font-weight:700;color:#111;transform:scaleX(0.8709);transform-origin:0 0;">U2</div>
<div class="t" style="left:593.20px;top:234.16px;font-size:10.8px;line-height:10.8px;letter-spacing:0.000px;font-weight:400;color:#111;transform:scaleX(0.8526);transform-origin:0 0;">DC</div>
<div class="t" style="left:612.50px;top:235.07px;font-size:10.2px;line-height:10.2px;letter-spacing:0.000px;font-weight:700;color:#111;transform:scaleX(0.9783);transform-origin:0 0;">1e-009Ohm</div>
<div class="t" style="left:568.10px;top:282.97px;font-size:10.2px;line-height:10.2px;letter-spacing:0.000px;font-weight:700;color:#111;transform:scaleX(0.8496);transform-origin:0 0;">V2</div>
<div class="t" style="left:568.10px;top:296.94px;font-size:10.0px;line-height:10.0px;letter-spacing:0.000px;font-weight:700;color:#111;transform:scaleX(0.9667);transform-origin:0 0;">15V</div>
<div class="t" style="left:653.80px;top:160.53px;font-size:10.6px;line-height:10.6px;letter-spacing:0.000px;font-weight:700;color:#111;transform:scaleX(0.8709);transform-origin:0 0;">U6</div>
<div class="t" style="left:653.80px;top:172.66px;font-size:10.8px;line-height:10.8px;letter-spacing:0.000px;font-weight:400;color:#111;transform:scaleX(0.8526);transform-origin:0 0;">DC</div>
<div class="t" style="left:674.20px;top:173.67px;font-size:10.2px;line-height:10.2px;letter-spacing:0.000px;font-weight:700;color:#111;transform:scaleX(0.9518);transform-origin:0 0;">10MOhm</div>
<div class="t" style="left:724.90px;top:164.57px;font-size:10.2px;line-height:10.2px;letter-spacing:0.000px;font-weight:700;color:#111;transform:scaleX(0.8973);transform-origin:0 0;">R3</div>
<div class="t" style="left:724.90px;top:176.23px;font-size:10.0px;line-height:10.0px;letter-spacing:0.000px;font-weight:700;color:#111;transform:scaleX(0.9514);transform-origin:0 0;">470Ω</div>
<div class="t" style="left:755.70px;top:222.03px;font-size:10.6px;line-height:10.6px;letter-spacing:0.000px;font-weight:700;color:#111;transform:scaleX(0.8709);transform-origin:0 0;">U3</div>
<div class="t" style="left:755.70px;top:234.16px;font-size:10.8px;line-height:10.8px;letter-spacing:0.000px;font-weight:400;color:#111;transform:scaleX(0.8526);transform-origin:0 0;">DC</div>
<div class="t" style="left:775.00px;top:235.07px;font-size:10.2px;line-height:10.2px;letter-spacing:0.000px;font-weight:700;color:#111;transform:scaleX(0.9783);transform-origin:0 0;">1e-009Ohm</div>
<div class="t" style="left:730.60px;top:282.97px;font-size:10.2px;line-height:10.2px;letter-spacing:0.000px;font-weight:700;color:#111;transform:scaleX(0.8496);transform-origin:0 0;">V3</div>
<div class="t" style="left:730.60px;top:296.94px;font-size:10.0px;line-height:10.0px;letter-spacing:0.000px;font-weight:700;color:#111;transform:scaleX(0.9667);transform-origin:0 0;">10V</div>
<div class="b" style="left:1005px;top:76px;width:1px;height:329px;background:#8a8a8a;"></div>
<div class="b" style="left:1006px;top:76px;width:18px;height:349px;background:#f0f0f0;"></div>
<div class="b" style="left:1006px;top:80px;width:18px;height:296px;background:#f3f3f3;border-left:1px solid #fff;box-sizing:border-box;"></div>
<svg class="b" style="left:1010px;top:88px;" width="12" height="11" viewBox="0 0 12 11"><rect x="3" y="0" width="4" height="3" fill="#30b8d0"/><rect x="0" y="3" width="2" height="6" fill="#111"/><rect x="9" y="3" width="2" height="6" fill="#d04030"/><circle cx="5" cy="6" r="1.5" fill="none" stroke="#222"/><rect x="0" y="8" width="11" height="1" fill="#888"/></svg>
<svg class="b" style="left:1010px;top:104px;" width="12" height="11" viewBox="0 0 12 11"><rect x="0" y="0" width="11" height="3.5" fill="#10a030"/><rect x="0.5" y="1" width="10" height="1.5" fill="#0a6020"/><path d="M1 7H3M4 7H6M7 7H9M1 9.5H3M4 9.5H6M7 9.5H10" stroke="#333" stroke-width="1.1"/></svg>
<svg class="b" style="left:1010px;top:119px;" width="12" height="11" viewBox="0 0 12 11"><rect x="0" y="0" width="4.5" height="5" fill="#fff" stroke="#222" stroke-width="0.9"/><rect x="6" y="0" width="4.5" height="5" fill="#fff" stroke="#223388" stroke-width="0.9"/><path d="M0.5 9H4M6 9H10.5" stroke="#664" stroke-width="1.4"/></svg>
<svg class="b" style="left:1010px;top:135px;" width="12" height="11" viewBox="0 0 12 11"><rect x="0" y="0.5" width="11" height="5" fill="#e8e0f0"/><path d="M0 1.5L3 4.5M3 1.5L6 4.5M6 1.5L9 4.5" stroke="#4050d0" stroke-width="0.9"/><path d="M2 1H10M2 4H10" stroke="#e04050" stroke-width="0.8"/><rect x="0" y="8" width="4" height="2" fill="#111"/><rect x="4" y="8" width="7" height="2" fill="#ddd"/></svg>
<svg class="b" style="left:1010px;top:151px;" width="12" height="11" viewBox="0 0 12 11"><path d="M0 3L3 1L6 4L9 2L11 3" stroke="#30a040" stroke-width="1.2" fill="none"/><path d="M0 4L3 3L6 5L9 1" stroke="#e05030" stroke-width="1" fill="none"/><rect x="8" y="0" width="3" height="1.5" fill="#e03030"/><path d="M0 8.5H11" stroke="#333" stroke-width="1.5" stroke-dasharray="1.5 0.5"/></svg>
<svg class="b" style="left:1010px;top:167px;" width="12" height="11" viewBox="0 0 12 11"><rect x="0" y="0" width="8" height="5" fill="#10a030"/><rect x="1.5" y="1.5" width="5" height="2" fill="#065a18"/><rect x="10" y="1" width="1" height="4" fill="#999"/><path d="M1 8.5H2.5M3.5 8.5H5M6 8.5H7.5M8.5 8.5H10" stroke="#222" stroke-width="1.3"/></svg>
<svg class="b" style="left:1010px;top:183px;" width="12" height="11" viewBox="0 0 12 11"><rect x="0" y="0" width="11" height="6" fill="#111"/><rect x="1" y="0.5" width="9" height="5" fill="#10b030"/><rect x="4" y="1.5" width="2" height="3" fill="#064a10"/><path d="M1 8.5H2M4 8.5H5M8 8.5H10M0 10H11" stroke="#555" stroke-width="1"/></svg>
<svg class="b" style="left:1010px;top:199px;" width="12" height="11" viewBox="0 0 12 11"><rect x="0" y="0" width="11" height="5" fill="#10a830"/><path d="M2 1V4M5 1V4M8 1V4" stroke="#064a10"/><path d="M2 7H3M5 7H6M8 7H9" stroke="#666"/><rect x="0" y="9" width="11" height="1" fill="#777"/></svg>
<svg class="b" style="left:1010px;top:214px;" width="12" height="11" viewBox="0 0 12 11"><rect x="0" y="0" width="11" height="5.5" fill="#111"/><rect x="0" y="0" width="5" height="5.5" fill="#108898"/><path d="M1 4L3 1.5L5 3L8 1" stroke="#30d0e0" fill="none"/><path d="M3 7.5H4M5 7.5H6M7 7.5H8" stroke="#444"/><rect x="0" y="9" width="11" height="1" fill="#777"/></svg>
<svg class="b" style="left:1010px;top:230px;" width="12" height="11" viewBox="0 0 12 11"><rect x="0" y="0" width="1" height="11" fill="#333"/><rect x="2" y="0" width="9" height="3.5" fill="#801830"/><rect x="2" y="3.5" width="9" height="3.5" fill="#3050b0"/><rect x="2" y="7" width="9" height="3.5" fill="#10a040"/><rect x="2" y="6" width="9" height="1" fill="#e0e0e0"/></svg>
<svg class="b" style="left:1010px;top:246px;" width="12" height="11" viewBox="0 0 12 11"><rect x="0" y="0" width="8.5" height="5" fill="#303090"/><rect x="1" y="1" width="6" height="2.5" fill="#101050"/><rect x="10" y="1" width="1" height="3" fill="#555"/><path d="M2 8.5H11" stroke="#333" stroke-width="1.4" stroke-dasharray="1.4 0.6"/></svg>
<svg class="b" style="left:1010px;top:262px;" width="12" height="11" viewBox="0 0 12 11"><rect x="0" y="0" width="11" height="4.5" fill="#111"/><path d="M5 3.5L7 1.5L9 3" stroke="#20c020" fill="none" stroke-width="1.3"/><path d="M0 9H11M8 6V9" stroke="#999"/></svg>
<svg class="b" style="left:1010px;top:278px;" width="12" height="11" viewBox="0 0 12 11"><rect x="0" y="0" width="11" height="5.5" fill="#0a0a0a"/><rect x="3" y="1" width="6" height="4" fill="#10b030"/><path d="M1 8L3 9.5H8M9 8V10" stroke="#777" fill="none"/></svg>
<svg class="b" style="left:1010px;top:294px;" width="12" height="11" viewBox="0 0 12 11"><rect x="0" y="0" width="8" height="6" fill="#10b030"/><path d="M2 1.5H4V4.5H2M5 1.5H7M5 4.5H7" stroke="#064010" fill="none" stroke-width="1.2"/><rect x="10" y="1" width="1" height="4" fill="#888"/><path d="M6 9H11" stroke="#555"/></svg>
<svg class="b" style="left:1010px;top:309px;" width="12" height="11" viewBox="0 0 12 11"><rect x="0" y="0" width="11" height="4" fill="#10a030"/><path d="M1 2H10" stroke="#064010" stroke-dasharray="2 1"/><path d="M1 9.5H4L1.5 6.5H4" stroke="#333" fill="none"/><path d="M5 9.5H11" stroke="#3050d0" stroke-width="2" stroke-dasharray="2 1"/></svg>
<svg class="b" style="left:1010px;top:325px;" width="12" height="11" viewBox="0 0 12 11"><path d="M0.5 3.5V0.5H5L9 4" stroke="#111" stroke-width="1.4" fill="none"/><path d="M6 3L10 0.5" stroke="#3050d0" stroke-width="1.2"/><path d="M2 9H11" stroke="#3050d0" stroke-width="2" stroke-dasharray="2 1"/></svg>
<svg class="b" style="left:1010px;top:341px;" width="12" height="11" viewBox="0 0 12 11"><rect x="0" y="0.5" width="11" height="5" fill="#f0e8f0"/><path d="M0 1.5L2 4.5L4 1.5L6 4.5L8 1.5L10 4.5" stroke="#e03050" stroke-width="0.9" fill="none"/><path d="M0 3H11" stroke="#3040c0" stroke-width="0.9"/><path d="M0 8.5H3" stroke="#333"/><path d="M4 8.5H11" stroke="#3050d0" stroke-width="2" stroke-dasharray="2 1"/></svg>
<svg class="b" style="left:1010px;top:357px;" width="12" height="11" viewBox="0 0 12 11"><rect x="0" y="0.5" width="11" height="5" fill="#f0e8f0"/><path d="M0 1.5L2 4.5L4 1.5L6 4.5L8 1.5L10 4.5" stroke="#e03050" stroke-width="0.9" fill="none"/><path d="M0 3H11" stroke="#3040c0" stroke-width="0.9"/><path d="M0 8.5H3" stroke="#333"/><path d="M4 8.5H11" stroke="#3050d0" stroke-width="2" stroke-dasharray="2 1"/></svg>
<div class="b" style="left:1008px;top:372px;width:14px;height:1px;background:#d0d0d0;"></div>
<svg class="b" style="left:1010px;top:380px;" width="12" height="11" viewBox="0 0 12 11"><rect x="0" y="0" width="11" height="10" fill="#111"/><path d="M3 2L9 5L3 8Z" fill="#e0e020"/><rect x="0" y="3" width="1.5" height="4" fill="#3050d0"/></svg>
<svg class="b" style="left:1014px;top:393px;" width="4" height="6" viewBox="0 0 4 6"><path d="M0 0L3.5 3L0 6Z" fill="#222"/></svg>
<div class="b" style="left:151px;top:399px;width:854px;height:5px;background:#f0f0f0;"></div>
<div class="b" style="left:208px;top:404px;width:797px;height:1px;background:#777;"></div>
<div class="b" style="left:1005px;top:79px;width:1px;height:326px;background:#777;"></div>
<div class="b" style="left:149px;top:399px;width:59px;height:23px;background:#f3f3f3;border-right:1.5px solid #333;border-bottom:1.5px solid #333;border-bottom-right-radius:2px;box-sizing:border-box;"></div>
<svg class="b" style="left:152px;top:407px;" width="13" height="13" viewBox="0 0 13 13"><path d="M0.5 0.5H8.5L12.5 4.5V12.5H0.5Z" fill="#fff" stroke="#222"/><path d="M8.5 0.5V4.5H12.5" fill="none" stroke="#222"/><path d="M2 2H5V5H3V9" stroke="#222" stroke-width="1.3" fill="none"/><path d="M2 6H7M5 3V10M2 10H6" stroke="#d03040" stroke-width="1.1" fill="none"/></svg>
<div class="t" style="left:168.00px;top:408.26px;font-size:9.5px;line-height:9.5px;letter-spacing:-0.466px;font-weight:400;color:#222;">Design1 *</div>
<svg class="b" style="left:992px;top:409px;" width="13" height="12" viewBox="0 0 13 12"><rect x="1.5" y="2.5" width="9" height="8" fill="#fff" stroke="#2a2aa0" stroke-width="1.2"/><rect x="4" y="5" width="5" height="4" fill="none" stroke="#2a2aa0"/><path d="M7 3L11 0.5" stroke="#2a2aa0"/><path d="M0 11.5H12V8" stroke="#888" fill="none"/></svg>
<svg class="b" style="left:1015px;top:412px;" width="8" height="8" viewBox="0 0 8 8"><path d="M0.5 0.5L4 3.5L7.5 0.5M0.5 4L4 7L7.5 4" stroke="#222" stroke-width="1.3" fill="none"/></svg>
<div class="b" style="left:0px;top:421.5px;width:146px;height:1px;background:#e2e2e2;"></div>
<div class="b" style="left:0px;top:424.5px;width:1024px;height:1px;background:#c8c8c8;"></div>
<div class="b" style="left:0px;top:426px;width:1024px;height:134px;background:#f0f0f0;"></div>
<div class="b" style="left:1px;top:428px;width:11px;height:10px;background:#f0f0f0;border-right:1px solid #888;border-bottom:1px solid #888;box-sizing:border-box;"></div>
<svg class="b" style="left:3.5px;top:430px;" width="6" height="6" viewBox="0 0 6 6"><path d="M0.8 0.8L5.2 5.2M5.2 0.8L0.8 5.2" stroke="#111" stroke-width="1.5"/></svg>
<div class="b" style="left:1px;top:440px;width:11px;height:10px;background:#f0f0f0;border-right:1px solid #888;border-bottom:1px solid #888;box-sizing:border-box;"></div>
<svg class="b" style="left:5px;top:443px;" width="3" height="4" viewBox="0 0 3 4"><path d="M0 0L2.5 2L0 4Z" fill="#aaa"/></svg>
<div class="b" style="left:0px;top:452px;width:13px;height:104px;background:linear-gradient(to bottom,#c9d7e5,#d3deea);"></div>
<div class="t" style="left:0px;top:452px;width:13px;height:104px;"><div style="position:absolute;left:0.5px;top:103px;transform-origin:0 0;transform:rotate(-90deg);font-size:9.5px;line-height:12px;color:#222;letter-spacing:0.15px;">Spreadsheet View</div></div>
<div class="b" style="left:16px;top:431px;width:1004px;height:108px;background:#fff;border-left:1px solid #a0a0a0;border-top:1px solid #a0a0a0;border-right:2px solid #7a7a7a;border-bottom:2px solid #7a7a7a;box-sizing:border-box;"></div>
<div class="t" style="left:35.50px;top:435.66px;font-size:9.5px;line-height:9.5px;letter-spacing:-0.041px;font-weight:400;color:#222;">Multisim</div>
<div class="b" style="left:75.3px;top:440.3px;width:2.5px;height:1.1px;background:#333;"></div>
<div class="t" style="left:83.90px;top:435.66px;font-size:9.5px;line-height:9.5px;letter-spacing:-0.496px;font-weight:400;color:#222;">17 апреля 2020 г., 1:06:45</div>
<div class="b" style="left:17px;top:538px;width:35px;height:18px;background:#f7f7f7;border-right:1px solid #777;border-bottom:1px solid #777;box-sizing:border-box;"></div>
<div class="t" style="left:21.00px;top:542.96px;font-size:9.5px;line-height:9.5px;letter-spacing:-0.740px;font-weight:400;color:#222;">Results</div>
<div class="b" style="left:53px;top:539px;width:30px;height:16px;background:#f0f0f0;border:1px solid #aaa;border-right-color:#666;border-bottom-color:#666;box-sizing:border-box;"></div>
<div class="t" style="left:56.00px;top:542.46px;font-size:9.5px;line-height:9.5px;letter-spacing:0.000px;font-weight:400;color:#222;">Nets</div>
<div class="b" style="left:85px;top:539px;width:52px;height:16px;background:#f0f0f0;border:1px solid #aaa;border-right-color:#666;border-bottom-color:#666;box-sizing:border-box;"></div>
<div class="t" style="left:88.50px;top:542.46px;font-size:9.5px;line-height:9.5px;letter-spacing:-0.886px;font-weight:400;color:#222;">Components</div>
<div class="b" style="left:139px;top:539px;width:57px;height:16px;background:#f0f0f0;border:1px solid #aaa;border-right-color:#666;border-bottom-color:#666;box-sizing:border-box;"></div>
<div class="t" style="left:142.50px;top:542.46px;font-size:9.5px;line-height:9.5px;letter-spacing:-0.703px;font-weight:400;color:#222;">Copper layers</div>
<div class="b" style="left:198px;top:539px;width:44px;height:16px;background:#f0f0f0;border:1px solid #aaa;border-right-color:#666;border-bottom-color:#666;box-sizing:border-box;"></div>
<div class="t" style="left:201.00px;top:542.46px;font-size:9.5px;line-height:9.5px;letter-spacing:-0.735px;font-weight:400;color:#222;">Simulation</div>
<div class="b" style="left:0px;top:559.5px;width:1024px;height:1px;background:#d5d5d5;"></div>
<div class="b" style="left:0px;top:560.5px;width:1024px;height:13.5px;background:#f0f0f0;"></div>
<div class="t" style="left:0.00px;top:564.26px;font-size:9.5px;line-height:9.5px;letter-spacing:-0.537px;font-weight:400;color:#222;">For Help, press F1</div>
<div class="b" style="left:701px;top:562px;width:1px;height:12px;background:#d8d8d8;"></div>
<div class="b" style="left:839px;top:562px;width:1px;height:12px;background:#d8d8d8;"></div>
<div class="b" style="left:591px;top:567px;width:2px;height:1.5px;background:#333;"></div>
<div class="b" style="left:844px;top:567px;width:2px;height:1.5px;background:#333;"></div>
<div class="b" style="left:981px;top:565px;width:7px;height:9px;border:1px solid #9a9a9a;border-bottom:none;box-sizing:border-box;background:#ececec;"></div>
<div class="b" style="left:988px;top:565px;width:7px;height:9px;border:1px solid #9a9a9a;border-bottom:none;box-sizing:border-box;background:#ececec;"></div>
<div class="b" style="left:995px;top:565px;width:7px;height:9px;border:1px solid #9a9a9a;border-bottom:none;box-sizing:border-box;background:#ececec;"></div>
<div class="b" style="left:1002px;top:565px;width:7px;height:9px;border:1px solid #9a9a9a;border-bottom:none;box-sizing:border-box;background:#ececec;"></div>
<div class="b" style="left:1009px;top:565px;width:7px;height:9px;border:1px solid #9a9a9a;border-bottom:none;box-sizing:border-box;background:#ececec;"></div>
<div class="b" style="left:1016px;top:565px;width:7px;height:9px;border:1px solid #9a9a9a;border-bottom:none;box-sizing:border-box;background:#ececec;"></div>
</body></html>
